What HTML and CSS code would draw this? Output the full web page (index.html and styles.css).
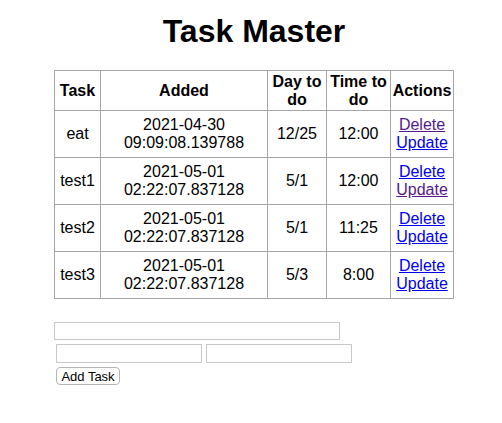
FILE: index.html
```html
<!DOCTYPE html>
<html>
<head>
<meta charset="utf-8">
<title>Task Master</title>
<link rel="stylesheet" href="styles.css">
</head>
<body>
<div class="page">
  <h1 class="title">Task Master</h1>
  <table class="tasks">
    <colgroup>
      <col class="c-task">
      <col class="c-added">
      <col class="c-day">
      <col class="c-time">
      <col class="c-actions">
    </colgroup>
    <thead>
      <tr>
        <th>Task</th>
        <th>Added</th>
        <th>Day to do</th>
        <th>Time to do</th>
        <th>Actions</th>
      </tr>
    </thead>
    <tbody>
      <tr>
        <td>eat</td>
        <td>2021-04-30 09:09:08.139788</td>
        <td>12/25</td>
        <td>12:00</td>
        <td><a class="link visited" href="#">Delete</a><br><a class="link" href="#">Update</a></td>
      </tr>
      <tr>
        <td>test1</td>
        <td>2021-05-01 02:22:07.837128</td>
        <td>5/1</td>
        <td>12:00</td>
        <td><a class="link" href="#">Delete</a><br><a class="link visited" href="#">Update</a></td>
      </tr>
      <tr>
        <td>test2</td>
        <td>2021-05-01 02:22:07.837128</td>
        <td>5/1</td>
        <td>11:25</td>
        <td><a class="link" href="#">Delete</a><br><a class="link" href="#">Update</a></td>
      </tr>
      <tr>
        <td>test3</td>
        <td>2021-05-01 02:22:07.837128</td>
        <td>5/3</td>
        <td>8:00</td>
        <td><a class="link" href="#">Delete</a><br><a class="link" href="#">Update</a></td>
      </tr>
    </tbody>
  </table>
  <form class="add-form">
    <input class="field field-wide" type="text">
    <div class="row">
      <input class="field field-half" type="text">
      <input class="field field-half" type="text">
    </div>
    <div class="row">
      <button class="btn" type="button">Add Task</button>
    </div>
  </form>
</div>
</body>
</html>
```
FILE: styles.css
```css
html, body {
  margin: 0;
  padding: 0;
  background: #ffffff;
}

body {
  font-family: "Liberation Sans", Arial, sans-serif;
  font-size: 16px;
  color: #000;
}

.page {
  padding-left: 6px;
}

.title {
  margin: 13px 0 21px;
  font-size: 32px;
  line-height: 36px;
  font-weight: bold;
  text-align: center;
}

.tasks {
  width: 400px;
  margin: 0 auto;
  border-collapse: collapse;
  table-layout: fixed;
}

.c-task { width: 46px; }
.c-added { width: 167px; }
.c-day { width: 59px; }
.c-time { width: 64px; }
.c-actions { width: 63px; }

.tasks th,
.tasks td {
  border: 1px solid #a6a6a6;
  text-align: center;
  vertical-align: middle;
  line-height: 18px;
}

.tasks th {
  padding: 2px 1px 1px;
  font-weight: bold;
}

.tasks td {
  padding: 5px 1px;
}

.link {
  color: #0000ee;
  text-decoration: underline;
}

.link.visited {
  color: #551a8b;
}

.add-form {
  display: flex;
  flex-direction: column;
  align-items: flex-start;
  margin: 23px 0 0 48px;
  gap: 4px;
}

.row {
  display: flex;
  gap: 4px;
  margin-left: 2px;
}

.field {
  box-sizing: border-box;
  margin: 0;
  border: 1px solid #c8c8c8;
  background: #fff;
  padding: 0 2px;
  font: 13px "Liberation Sans", Arial, sans-serif;
}

.field-wide {
  width: 286px;
  height: 18px;
}

.field-half {
  width: 146px;
  height: 19px;
}

.btn {
  box-sizing: border-box;
  width: 64px;
  height: 18px;
  margin: 0;
  padding: 0 2px;
  border: 1px solid #b5b5b5;
  border-radius: 4px;
  background: #fff;
  font: 13px "Liberation Sans", Arial, sans-serif;
  color: #000;
  line-height: 15px;
  white-space: nowrap;
}
```
